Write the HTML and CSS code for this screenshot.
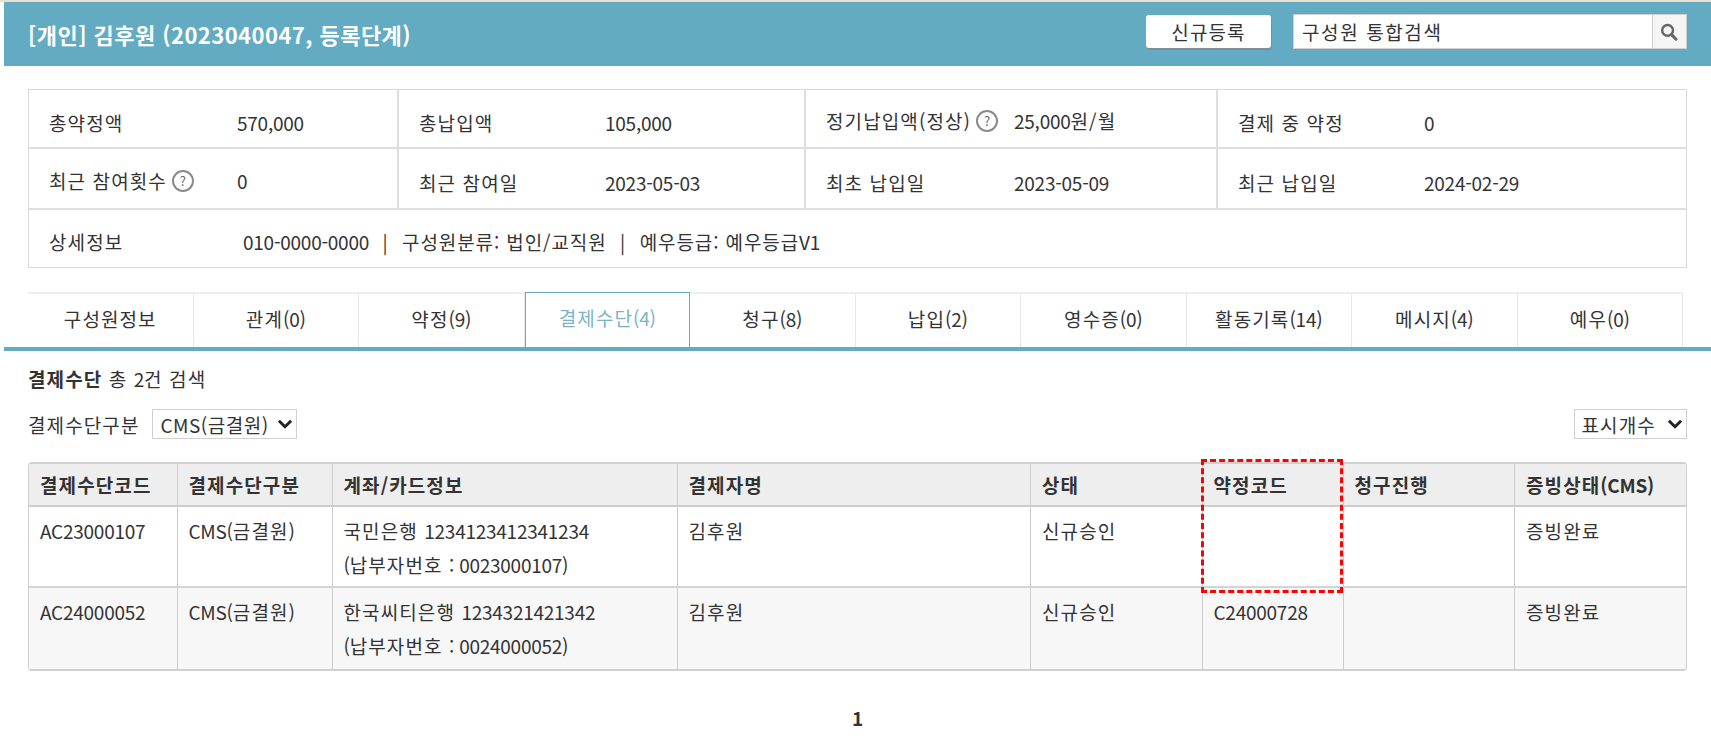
FILE: index.html
```html
<!DOCTYPE html>
<html lang="ko">
<head>
  <meta charset="UTF-8" />
  <meta name="viewport" content="width=device-width, initial-scale=1.0"/>
  <title>구성원 결제수단</title>
  <link rel="stylesheet" href="styles.css">
</head>
<body>

  <div class="page">

    <header class="member-header">
      <h1>[개인] 김후원 (2023040047, 등록단계)</h1>
      <button class="btn-new">신규등록</button>
      <form class="search">
        <input type="text" value="구성원 통합검색" />
        <button type="button" aria-label="검색">
          <svg viewBox="0 0 18 18" width="18" height="18"><circle cx="7.6" cy="7.4" r="5.4" fill="none" stroke="#666" stroke-width="2.4"/><path d="M11.6 11.6 16 16.2" stroke="#666" stroke-width="3" stroke-linecap="round"/></svg>
        </button>
      </form>
    </header>

    <div class="content">

      <section class="summary">
        <div class="summary-cell w1"><span class="label">총약정액</span><span class="num">570,000</span></div>
        <div class="summary-cell w2"><span class="label">총납입액</span><span class="num">105,000</span></div>
        <div class="summary-cell w3 up"><span class="label">정기납입액(정상)<i class="help">?</i></span><span><span class="num">25,000</span>원/월</span></div>
        <div class="summary-cell w4"><span class="label">결제 중 약정</span><span class="num">0</span></div>
        <div class="summary-cell w1 up"><span class="label">최근 참여횟수<i class="help">?</i></span><span class="num">0</span></div>
        <div class="summary-cell w2"><span class="label">최근 참여일</span><span class="num">2023-05-03</span></div>
        <div class="summary-cell w3"><span class="label">최초 납입일</span><span class="num">2023-05-09</span></div>
        <div class="summary-cell w4"><span class="label">최근 납입일</span><span class="num">2024-02-29</span></div>
        <div class="summary-cell full">
          <span class="label detail-label">상세정보</span>
          <span class="detail"><span class="num">010-0000-0000</span><i>|</i>구성원분류: 법인/교직원<i>|</i>예우등급: 예우등급<span class="num">V1</span></span>
        </div>
      </section>

    </div>

    <nav class="tabs">
      <a href="#">구성원정보</a>
      <a href="#">관계<span class="num">(0)</span></a>
      <a href="#">약정<span class="num">(9)</span></a>
      <a href="#" class="active">결제수단<span class="num">(4)</span></a>
      <a href="#">청구<span class="num">(8)</span></a>
      <a href="#">납입<span class="num">(2)</span></a>
      <a href="#">영수증<span class="num">(0)</span></a>
      <a href="#">활동기록<span class="num">(14)</span></a>
      <a href="#">메시지<span class="num">(4)</span></a>
      <a href="#">예우<span class="num">(0)</span></a>
    </nav>

    <div class="content">

      <p class="count"><b>결제수단</b> 총 <span class="num">2</span>건 검색</p>

      <div class="filters">
        <label for="payType">결제수단구분</label>
        <select id="payType" class="pay-type">
          <option>CMS(금결원)</option>
        </select>
        <select class="page-size">
          <option>표시개수</option>
        </select>
      </div>

      <div class="table-wrap">
        <table>
          <colgroup>
            <col class="c1"><col class="c2"><col class="c3"><col class="c4">
            <col class="c5"><col class="c6"><col class="c7"><col class="c8">
          </colgroup>
          <thead>
            <tr>
              <th>결제수단코드</th>
              <th>결제수단구분</th>
              <th>계좌/카드정보</th>
              <th>결제자명</th>
              <th>상태</th>
              <th>약정코드</th>
              <th>청구진행</th>
              <th>증빙상태<span class="num">(CMS)</span></th>
            </tr>
          </thead>
          <tbody>
            <tr>
              <td class="num">AC23000107</td>
              <td><span class="num">CMS(</span>금결원<span class="num">)</span></td>
              <td>국민은행 <span class="num">1234123412341234</span><br><span class="num">(</span>납부자번호 <span class="num">: 0023000107)</span></td>
              <td>김후원</td>
              <td>신규승인</td>
              <td></td>
              <td></td>
              <td>증빙완료</td>
            </tr>
            <tr>
              <td class="num">AC24000052</td>
              <td><span class="num">CMS(</span>금결원<span class="num">)</span></td>
              <td>한국씨티은행 <span class="num">1234321421342</span><br><span class="num">(</span>납부자번호 <span class="num">: 0024000052)</span></td>
              <td>김후원</td>
              <td>신규승인</td>
              <td class="num">C24000728</td>
              <td></td>
              <td>증빙완료</td>
            </tr>
          </tbody>
        </table>
        <div class="highlight"></div>
      </div>

      <div class="pagination"><b>1</b></div>

    </div>

  </div>

</body>
</html>
```

FILE: styles.css
```css
* {
  box-sizing: border-box;
}

body {
  margin: 0;
  background: white;
  border-top: 2px solid #e9dfcd;
  font-family: "Noto Sans CJK KR", "Noto Sans", sans-serif;
  font-size: 19px;
  letter-spacing: 1.1px;
  color: #333;
  overflow: hidden;
}

/* digits and latin run narrower than the hangul around them */
.num {
  letter-spacing: -0.25px;
}

.page {
  padding-left: 4px;
}

.content {
  padding: 0 24.5px 0 24px;
}

/* header */
.member-header {
  display: flex;
  align-items: center;
  height: 63.5px;
  padding: 0 24.5px 0 24px;
  background: #62abc2;
}

.member-header h1 {
  flex: 1;
  margin: 0;
  font-size: 22px;
  font-weight: 700;
  letter-spacing: 0.45px;
  color: white;
}

.btn-new {
  width: 125px;
  height: 33px;
  margin: 0 22px 4px 0;
  background: white;
  border: none;
  border-radius: 3px;
  box-shadow: 1px 2px 0 #7f8f96;
  font: inherit;
  letter-spacing: inherit;
  line-height: 28px;
  color: #333;
}

.search {
  display: flex;
  width: 393.5px;
  height: 35px;
  margin-bottom: 4px;
  border: 1px solid #cfcfcf;
}

.search input {
  flex: 1;
  min-width: 0;
  padding: 0 8px;
  border: none;
  font: inherit;
  letter-spacing: 1.6px;
  color: #333;
}

.search button {
  display: flex;
  align-items: center;
  justify-content: center;
  width: 34px;
  padding: 0;
  background: #f5f5f5;
  border: none;
  border-left: 1px solid #cfcfcf;
}

/* summary box */
.summary {
  display: grid;
  grid-template-columns: 370px 407px 412px 1fr;
  grid-template-rows: 59px 61px 57px;
  margin-top: 23.5px;
  border: 1px solid #d8d8d8;
}

.summary-cell {
  display: flex;
  align-items: center;
  padding: 7px 0 0 20px;
  border-right: 2px solid #dedede;
  border-bottom: 2px solid #dedede;
  white-space: nowrap;
}

.summary-cell.up {
  padding-top: 4px;
}

.summary-cell.w4 {
  border-right: none;
}

.summary-cell.full {
  grid-column: 1 / -1;
  padding-top: 6px;
  border: none;
}

.label {
  display: flex;
  align-items: center;
  width: 188px;
  flex-shrink: 0;
}

.w2 .label, .w4 .label {
  width: 186px;
}

.detail-label {
  width: 194px;
}

.detail {
  letter-spacing: 0.9px;
}

.detail i {
  margin: 0 13.5px;
  font-style: normal;
}

.help {
  display: inline-flex;
  align-items: center;
  justify-content: center;
  width: 22px;
  height: 22px;
  margin-left: 5px;
  border: 2px solid #8a8a8a;
  border-radius: 50%;
  font-size: 13px;
  font-style: normal;
  letter-spacing: 0;
  color: #666;
}

/* tabs */
.tabs {
  display: flex;
  margin-top: 24px;
  padding-left: 24px;
  border-bottom: 4.5px solid #62abc2;
}

.tabs a {
  width: 165.5px;
  height: 55px;
  padding-top: 11px;
  border-top: 2px solid #efefef;
  border-right: 1px solid #e8e8e8;
  text-align: center;
  text-decoration: none;
  color: #333;
}

.tabs a.active {
  border: 1px solid #62abc2;
  border-bottom: none;
  color: #7ab3c7;
}

/* list */
.count {
  margin: 15px 0 0;
  line-height: 26px;
}

.filters {
  display: flex;
  align-items: center;
  gap: 13px;
  margin-top: 17px;
}

.filters select {
  height: 30px;
  padding: 0 26px 0 7px;
  background: white url("data:image/svg+xml,%3Csvg xmlns='http://www.w3.org/2000/svg' viewBox='0 0 14 9'%3E%3Cpath d='M1.5 1.5 7 7l5.5-5.5' fill='none' stroke='%23222' stroke-width='2.6'/%3E%3C/svg%3E") no-repeat right 3px center / 16px 10px;
  border: 1px solid #d0d0d0;
  font: inherit;
  letter-spacing: 0.5px;
  color: #333;
  appearance: none;
}

.filters .pay-type {
  width: 145px;
}

.filters .page-size {
  width: 113px;
  margin-left: auto;
  letter-spacing: 1.1px;
}

.table-wrap {
  position: relative;
  margin-top: 23px;
}

table {
  width: 100%;
  border-collapse: separate;
  border-spacing: 0;
  table-layout: fixed;
  border-top: 2px solid #d0d0d0;
  border-left: 1px solid #d0d0d0;
  border-right: 1px solid #d0d0d0;
  border-bottom: 2px solid #d0d0d0;
  border-radius: 4px;
}

.c1 { width: 148.5px; }
.c2 { width: 155px; }
.c3 { width: 345px; }
.c4 { width: 353.5px; }
.c5 { width: 171.5px; }
.c6 { width: 141px; }
.c7 { width: 171.5px; }

th, td {
  padding: 0 11px;
  border-right: 1px solid #cdcdcd;
  text-align: left;
  vertical-align: top;
  white-space: nowrap;
}

th:last-child, td:last-child {
  border-right: none;
}

th {
  height: 43px;
  padding-top: 7px;
  line-height: 27px;
  background: #eee;
  border-bottom: 2px solid #cdcdcd;
  font-weight: 700;
}

td {
  height: 81px;
  padding-top: 7px;
  line-height: 34px;
}

tbody tr:first-child td {
  border-bottom: 2px solid #d4d4d4;
}

tbody tr:nth-child(2) td {
  background: #f7f7f7;
}

/* red marker over the 약정코드 column */
.highlight {
  position: absolute;
  top: -3px;
  left: 1173px;
  width: 142px;
  height: 134px;
  border: 3px dashed #f00;
}

.pagination {
  margin-top: 32.5px;
  padding-left: 2px;
  text-align: center;
}
```
